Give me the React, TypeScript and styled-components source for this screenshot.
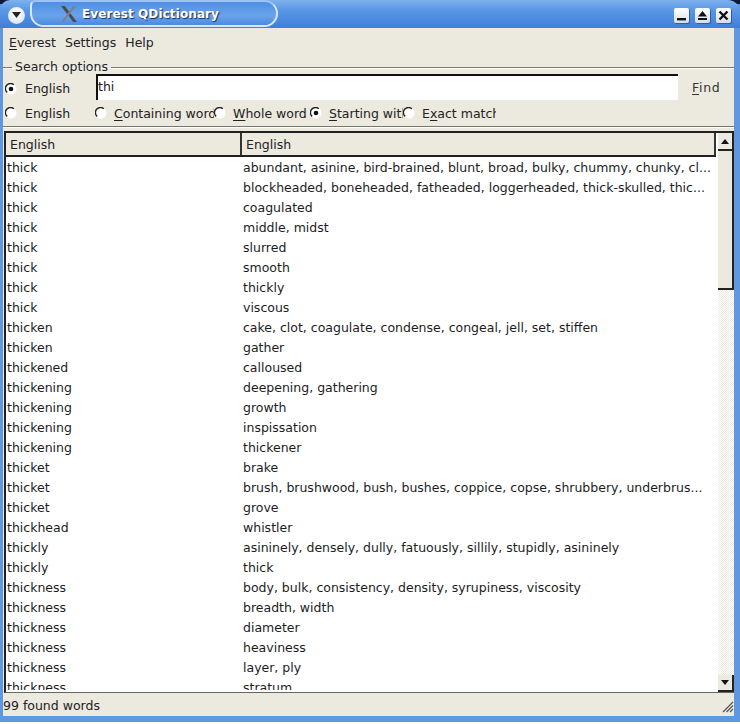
import React from "react";
import styled, { createGlobalStyle } from "styled-components";

const CREAM = "#ece9df";
const FONT = `"DejaVu Sans", Verdana, sans-serif`;

const GlobalStyle = createGlobalStyle`
    html, body {
        margin: 0;
        padding: 0;
        background: #ffffff;
    }
    body {
        font-family: ${FONT};
        font-size: 12.5px;
        color: #111;
    }
`;

const Win = styled.div`
    box-sizing: border-box;
    width: 740px;
    height: 722px;
    display: flex;
    flex-direction: column;
    background: #5f97e0;
    background-image: linear-gradient(#0b1a3c, #0b1a3c);
    background-size: 100% 4px;
    background-repeat: no-repeat;
    overflow: hidden;
`;

const TitleBar = styled.div`
    flex: none;
    height: 28px;
    display: flex;
    align-items: center;
    padding: 0 8px;
    border-radius: 10px 12px 0 0;
    background: linear-gradient(#7fb2ee 0%, #5a97e6 35%, #3e7fd8 100%);
`;

const MenuBtn = styled.div`
    flex: none;
    width: 17px;
    height: 17px;
    margin-top: 2px;
    border-radius: 50%;
    background: radial-gradient(circle at 50% 35%, #ffffff, #d5def0);
    display: flex;
    align-items: center;
    justify-content: center;
`;

const TitlePill = styled.div`
    box-sizing: border-box;
    flex: none;
    width: 248px;
    height: 27px;
    margin: -1px 0 0 5px;
    padding-left: 28px;
    display: flex;
    align-items: center;
    gap: 4px;
    border: 2px solid #d8e8fb;
    border-top-color: #9cc4f3;
    border-radius: 6px 14px 14px 14px;
    background: linear-gradient(#4f8fe4, #6aa3ea 60%, #4c8ae0);
`;

const TitleText = styled.span`
    color: #fff;
    font-weight: bold;
    font-size: 12px;
    letter-spacing: 0.1px;
    text-shadow: 1px 1px 1px #1c2e58;
    white-space: nowrap;
`;

const WinButtons = styled.div`
    margin-left: auto;
    margin-top: 2px;
    display: flex;
    gap: 6px;
    padding-right: 1px;
`;

const WinBtn = styled.div`
    width: 15px;
    height: 15px;
    border-radius: 2px;
    background: linear-gradient(#ffffff, #d7deea);
    box-shadow: 1px 1px 0 #2f5da8;
    display: flex;
    align-items: center;
    justify-content: center;
`;

const Body = styled.div`
    flex: 1;
    min-height: 0;
    margin: 0 6px 6px 3px;
    display: flex;
    flex-direction: column;
    background: ${CREAM};
`;

const MenuBar = styled.div`
    flex: none;
    height: 28px;
    display: flex;
    align-items: center;
    gap: 9px;
    padding-left: 6px;
    margin-bottom: 4px;
`;

const MenuItem = styled.span`
    font-size: 12.5px;
    color: #222;
`;

const Mnemonic = styled.span`
    text-decoration: underline;
    text-underline-offset: 2px;
`;

const Group = styled.fieldset`
    box-sizing: border-box;
    flex: none;
    height: 67px;
    margin: 0;
    padding: 0;
    min-width: 0;
    border: 0;
    border-top: 1px solid #77776f;
    border-bottom: 1px solid #77776f;
    box-shadow: inset 0 1px 0 #fff, 0 1px 0 #fff;
`;

const GroupTitle = styled.legend`
    margin-left: 9px;
    padding: 0 3px;
    font-size: 12.5px;
    color: #222;
    line-height: 14px;
`;

const SearchRow = styled.div`
    display: flex;
    align-items: flex-start;
    height: 27px;
`;

const LangCell = styled.div`
    flex: none;
    width: 93px;
    padding: 7px 0 0 2px;
    box-sizing: border-box;
    display: flex;
    align-items: center;
`;

const TextInput = styled.input`
    box-sizing: border-box;
    flex: none;
    width: 582px;
    height: 26px;
    margin: 0;
    padding: 0 0 4px 0;
    border: 0;
    border-top: 2px solid #111;
    border-left: 2px solid #111;
    outline: 0;
    background: #fff;
    font-family: ${FONT};
    font-size: 12.5px;
    color: #222;
`;

const FindLabel = styled.span`
    margin: 6px 0 0 14px;
    font-size: 12.5px;
    letter-spacing: 0.7px;
    color: #333;
`;

const OptionRow = styled.div`
    display: flex;
    align-items: center;
    height: 24px;
`;

const Option = styled.label<{ $w: number }>`
    flex: none;
    width: ${(p) => p.$w}px;
    display: flex;
    align-items: center;
    overflow: hidden;
    white-space: nowrap;
`;

const OptionText = styled.span`
    margin-left: 8px;
    font-size: 12.5px;
    color: #222;
`;

const OptionLabel = styled(OptionText)`
    margin-left: 7px;
`;

const LangOption = styled(OptionRow)`
    flex: none;
    width: 92px;
    height: auto;
    padding-left: 2px;
    box-sizing: border-box;
`;

const Table = styled.div`
    flex: 1;
    min-height: 0;
    margin: 4px 0 0 1px;
    display: flex;
    border-top: 2px solid #222;
    border-left: 2px solid #222;
    border-bottom: 1px solid #666;
    background: #fff;
`;

const TableMain = styled.div`
    flex: 1;
    min-width: 0;
    display: flex;
    flex-direction: column;
`;

const HeaderRow = styled.div`
    flex: none;
    height: 22px;
    display: flex;
    background: ${CREAM};
    border-bottom: 2px solid #222;
    margin-right: 2px;
`;

const HeaderCell = styled.div<{ $w?: number }>`
    box-sizing: border-box;
    ${(p) => (p.$w ? `flex: none; width: ${p.$w}px;` : "flex: 1;")}
    padding: 4px 0 0 4px;
    font-size: 12.5px;
    color: #222;
    border-right: 2px solid #333;
`;

const Rows = styled.div`
    flex: 1;
    min-height: 0;
    margin-bottom: 2px;
    overflow: hidden;
`;

const Row = styled.div`
    height: 20px;
    display: flex;
    align-items: center;
    font-size: 12.5px;
    color: #1c1c1c;
    white-space: nowrap;
`;

const WordCell = styled.span`
    flex: none;
    width: 237px;
    padding-left: 1px;
    box-sizing: border-box;
`;

const MeaningCell = styled.span`
    flex: 1;
    min-width: 0;
    overflow: hidden;
`;

const ScrollBar = styled.div`
    flex: none;
    width: 16px;
    display: flex;
    flex-direction: column;
    background-color: #fff;
    background-image: conic-gradient(
        ${CREAM} 25%,
        #fff 0 50%,
        ${CREAM} 0 75%,
        #fff 0
    );
    background-size: 2px 2px;
`;

const ScrollBtn = styled.div<{ $h: number }>`
    box-sizing: border-box;
    flex: none;
    height: ${(p) => p.$h}px;
    background: ${CREAM};
    border-right: 2px solid #222;
    border-bottom: 2px solid #222;
    display: flex;
    align-items: center;
    justify-content: center;
`;

const Thumb = styled.div`
    box-sizing: border-box;
    flex: none;
    height: 139px;
    background: ${CREAM};
    border-right: 2px solid #222;
    border-bottom: 2px solid #222;
`;

const ScrollGap = styled.div`
    flex: 1;
`;

const StatusBar = styled.div`
    flex: none;
    height: 23px;
    padding-top: 2px;
    box-sizing: border-box;
    display: flex;
    align-items: center;
    justify-content: space-between;
    font-size: 12.5px;
    color: #222;
`;

const Radio = ({ on }: { on?: boolean }) => (
    <svg width="12" height="12" viewBox="0 0 12 12" style={{ flex: "none" }}>
        <circle cx="6" cy="6" r="5.5" fill="#fff" />
        <path d="M2.2 9.4A5 5 0 0 1 8.8 1.7" fill="none" stroke="#222" strokeWidth="1.4" />
        {on && <circle cx="6" cy="6" r="2.3" fill="#111" />}
    </svg>
);

const Arrow = ({ down }: { down?: boolean }) => (
    <svg width="8" height="5" viewBox="0 0 8 5">
        <path d={down ? "M0 0h8L4 5z" : "M0 5h8L4 0z"} fill="#111" />
    </svg>
);

const WORDS: [string, string][] = [
    ["thick", "abundant, asinine, bird-brained, blunt, broad, bulky, chummy, chunky, cl..."],
    ["thick", "blockheaded, boneheaded, fatheaded, loggerheaded, thick-skulled, thic..."],
    ["thick", "coagulated"],
    ["thick", "middle, midst"],
    ["thick", "slurred"],
    ["thick", "smooth"],
    ["thick", "thickly"],
    ["thick", "viscous"],
    ["thicken", "cake, clot, coagulate, condense, congeal, jell, set, stiffen"],
    ["thicken", "gather"],
    ["thickened", "calloused"],
    ["thickening", "deepening, gathering"],
    ["thickening", "growth"],
    ["thickening", "inspissation"],
    ["thickening", "thickener"],
    ["thicket", "brake"],
    ["thicket", "brush, brushwood, bush, bushes, coppice, copse, shrubbery, underbrus..."],
    ["thicket", "grove"],
    ["thickhead", "whistler"],
    ["thickly", "asininely, densely, dully, fatuously, sillily, stupidly, asininely"],
    ["thickly", "thick"],
    ["thickness", "body, bulk, consistency, density, syrupiness, viscosity"],
    ["thickness", "breadth, width"],
    ["thickness", "diameter"],
    ["thickness", "heaviness"],
    ["thickness", "layer, ply"],
    ["thickness", "stratum"],
];

const App = () => {
    return (
        <>
            <GlobalStyle />
            <Win>
                <TitleBar>
                    <MenuBtn>
                        <svg width="9" height="6" viewBox="0 0 9 6">
                            <path d="M0 0h9L4.500 6z" fill="#222" />
                        </svg>
                    </MenuBtn>
                    <TitlePill>
                        <svg width="18" height="18" viewBox="0 0 17 17" style={{ flex: "none" }}>
                            <path d="M1 1h3.500L16 16h-3.500z" fill="#4a4a55" />
                            <path d="M15 1h-2.500L1 16h2.500z" fill="#7d8290" />
                        </svg>
                        <TitleText>Everest QDictionary</TitleText>
                    </TitlePill>
                    <WinButtons>
                        <WinBtn>
                            <svg width="11" height="11" viewBox="0 0 11 11">
                                <rect x="1" y="8" width="9" height="2.400" fill="#111" />
                            </svg>
                        </WinBtn>
                        <WinBtn>
                            <svg width="11" height="11" viewBox="0 0 11 11">
                                <path d="M5.500 1L10 6.500H1z" fill="#111" />
                                <rect x="1" y="8" width="9" height="2" fill="#111" />
                            </svg>
                        </WinBtn>
                        <WinBtn>
                            <svg width="11" height="11" viewBox="0 0 11 11">
                                <path d="M1.500 1.500l8 8M9.500 1.500l-8 8" stroke="#111" strokeWidth="2.400" />
                            </svg>
                        </WinBtn>
                    </WinButtons>
                </TitleBar>
                <Body>
                    <MenuBar>
                        <MenuItem>
                            <Mnemonic>E</Mnemonic>verest
                        </MenuItem>
                        <MenuItem>Settings</MenuItem>
                        <MenuItem>Help</MenuItem>
                    </MenuBar>
                    <Group>
                        <GroupTitle>Search options</GroupTitle>
                        <SearchRow>
                            <LangCell>
                                <Radio on />
                                <OptionText>English</OptionText>
                            </LangCell>
                            <TextInput defaultValue="thi" />
                            <FindLabel>
                                <Mnemonic>F</Mnemonic>ind
                            </FindLabel>
                        </SearchRow>
                        <OptionRow>
                            <LangOption>
                                <Radio />
                                <OptionText>English</OptionText>
                            </LangOption>
                            <Option $w={119}>
                                <Radio />
                                <OptionLabel>
                                    <Mnemonic>C</Mnemonic>ontaining word
                                </OptionLabel>
                            </Option>
                            <Option $w={96}>
                                <Radio />
                                <OptionLabel>
                                    <Mnemonic>W</Mnemonic>hole word
                                </OptionLabel>
                            </Option>
                            <Option $w={93}>
                                <Radio on />
                                <OptionLabel>
                                    <Mnemonic>S</Mnemonic>tarting with
                                </OptionLabel>
                            </Option>
                            <Option $w={93}>
                                <Radio />
                                <OptionLabel>
                                    E<Mnemonic>x</Mnemonic>act match
                                </OptionLabel>
                            </Option>
                        </OptionRow>
                    </Group>
                    <Table>
                        <TableMain>
                            <HeaderRow>
                                <HeaderCell $w={236}>English</HeaderCell>
                                <HeaderCell>English</HeaderCell>
                            </HeaderRow>
                            <Rows>
                                {WORDS.map(([word, meaning], i) => (
                                    <Row key={i}>
                                        <WordCell>{word}</WordCell>
                                        <MeaningCell>{meaning}</MeaningCell>
                                    </Row>
                                ))}
                            </Rows>
                        </TableMain>
                        <ScrollBar>
                            <ScrollBtn $h={18}>
                                <Arrow />
                            </ScrollBtn>
                            <Thumb />
                            <ScrollGap />
                            <ScrollBtn $h={17}>
                                <Arrow down />
                            </ScrollBtn>
                        </ScrollBar>
                    </Table>
                    <StatusBar>
                        <span>99 found words</span>
                        <svg width="14" height="14" viewBox="0 0 14 14">
                            <path
                                d="M13 3L3 13M13 6.500L6.500 13M13 10L10 13"
                                stroke="#555"
                                strokeWidth="1.200"
                            />
                        </svg>
                    </StatusBar>
                </Body>
            </Win>
        </>
    );
};

export default App;
